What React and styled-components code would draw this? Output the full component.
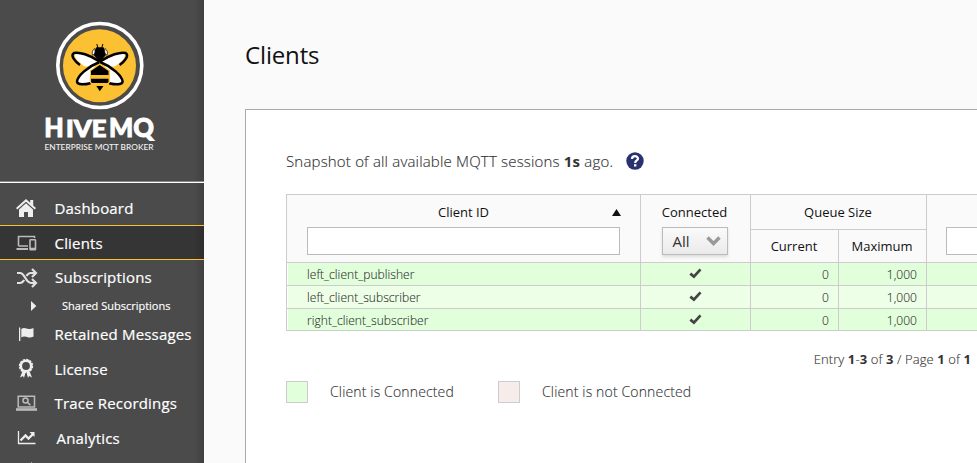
import React from "react";
import styled, { createGlobalStyle } from "styled-components";

const Global = createGlobalStyle`
  * { box-sizing: border-box; }
  html, body { margin: 0; height: 463px; overflow: hidden; }
  body { background: #fafafa; font-family: "Open Sans", "Noto Sans", sans-serif; color: #333; }
`;

const Page = styled.div`
  display: flex;
  width: 977px;
  height: 463px;
  overflow: hidden;
`;

const Sidebar = styled.aside`
  flex: 0 0 204px;
  height: 463px;
  overflow: hidden;
  background: linear-gradient(90deg, transparent 194px, rgba(0, 0, 0, 0.14) 204px), #4b4b4b;
  color: #fff;
`;

const Brand = styled.div`
  height: 183px;
  padding-top: 20px;
  border-bottom: 1px solid #fff;
  box-shadow: inset 0 -1px #8a8a8a;
`;

const Logo = styled.svg`
  display: block;
  width: 204px;
  height: 140px;
`;

const Nav = styled.nav`
  display: flex;
  flex-direction: column;
  padding-top: 8px;
`;

const NavItem = styled.a`
  display: flex;
  align-items: center;
  height: ${(p) => p.$h}px;
  flex: none;
  padding-left: 15px;
  background: ${(p) => (p.$active ? "linear-gradient(90deg, transparent 194px, rgba(0,0,0,.14) 204px), #353535" : "none")};
  border: solid ${(p) => (p.$active ? "#fcc033" : "transparent")};
  border-width: 1px 0;
`;

const IconBox = styled.span`
  display: flex;
  flex: none;
  width: 23px;
  height: 23px;
  margin-right: ${(p) => 16.5 + (p.$shift || 0)}px;
  svg { width: 23px; height: 23px; }
`;

const NavLabel = styled.span`
  font-size: 15px;
  font-weight: 400;
  line-height: 20px;
  white-space: nowrap;
  letter-spacing: 0.18px;
  -webkit-text-stroke: 0.2px #fff;
`;

const SubItem = styled.a`
  display: flex;
  flex: none;
  align-items: center;
  height: 23px;
  padding-left: 31px;
  gap: 25px;
  font-size: 11px;
  white-space: nowrap;
  -webkit-text-stroke: 0.15px #fff;
  svg { width: 6px; height: 10px; }
`;

const Main = styled.main`
  flex: 1;
  min-width: 0;
  padding-left: 41px;
  overflow: hidden;
`;

const Title = styled.h1`
  margin: 0;
  height: 109px;
  padding-top: 38px;
  color: #111;
  font-size: 24px;
  line-height: 34px;
  font-weight: 400;
  letter-spacing: -0.15px;
`;

const Panel = styled.section`
  width: 760px;
  height: 380px;
  padding: 39px 0 0 40px;
  background: #fff;
  border: 1px solid #aaa;
`;

const Snapshot = styled.div`
  display: flex;
  align-items: center;
  gap: 13px;
  height: 24px;
  font-size: 15px;
  font-weight: 300;
  letter-spacing: 0.185px;
  -webkit-text-stroke: 0.15px #333;
  white-space: nowrap;
  b { font-weight: 700; -webkit-text-stroke: 0; }
  svg { width: 18px; height: 18px; }
`;

const Table = styled.div`
  display: grid;
  grid-template-columns: 354px 110px 88px 88px 120px;
  grid-template-rows: 35px 33px 23px 23px 22px;
  width: 761px;
  margin-top: 21px;
  border: solid #ccc;
  border-width: 1px 0 0 1px;
`;

const Head = styled.div`
  display: flex;
  flex-direction: column;
  align-items: center;
  grid-row: ${(p) => (p.$tall ? "span 2" : "auto")};
  grid-column: ${(p) => p.$col || "auto"};
  padding: ${(p) => p.$top}px ${(p) => 20 + (p.$nudge || 0)}px 0 ${(p) => 20 - (p.$nudge || 0)}px;
  background: #fafafa;
  color: #111;
  font-size: 13px;
  line-height: 18px;
  border: solid #ccc;
  border-width: 0 1px 1px 0;
`;

const HeadTitle = styled.div`
  display: grid;
  grid-template-columns: 1fr auto 1fr;
  align-items: center;
  width: 100%;
  svg { width: 9px; height: 7px; justify-self: end; margin-right: -1px; }
`;

const Filter = styled.input`
  width: 313px;
  flex: none;
  align-self: flex-start;
  height: 28px;
  margin-top: 6px;
  padding: 0;
  border: 1px solid #bbb;
  background: #fff;
`;

const Select = styled.button`
  display: flex;
  align-items: center;
  justify-content: space-between;
  flex: none;
  width: 66px;
  height: 28px;
  margin-top: 6px;
  padding: 0 6px 0 10px;
  border: 1px solid #bbb;
  background: linear-gradient(#fafafa, #eaeaea);
  box-shadow: 0 2px 3px rgba(0, 0, 0, 0.12);
  color: #333;
  font: 400 15px "Open Sans", sans-serif;
  svg { width: 15px; height: 10px; }
`;

const Cell = styled.div`
  display: flex;
  align-items: flex-start;
  justify-content: ${(p) => p.$align || "flex-start"};
  min-width: 0;
  padding: 0 ${(p) => p.$right || 0}px 0 ${(p) => p.$left || 0}px;
  line-height: 24px;
  background: ${(p) => (p.$alt ? "#edffe6" : "#e2ffdc")};
  border: solid #ccc;
  border-width: 0 1px 1px 0;
  box-shadow: ${(p) => (p.$left ? "inset 1px 0 #fff" : "none")};
  font-size: 12px;
  font-weight: 300;
  letter-spacing: 0.05px;
  -webkit-text-stroke: 0.12px #333;
  svg { width: 13px; height: 11px; margin-top: 5px; }
`;

const Pager = styled.div`
  width: 685px;
  height: 20px;
  margin-top: 18px;
  font-size: 13px;
  line-height: 20px;
  font-weight: 300;
  letter-spacing: 0.1px;
  -webkit-text-stroke: 0.12px #333;
  text-align: right;
  b { font-weight: 700; -webkit-text-stroke: 0; }
`;

const Legend = styled.div`
  display: flex;
  align-items: center;
  height: 22px;
  margin-top: 12px;
  font-size: 14px;
  font-weight: 300;
  letter-spacing: 0.15px;
  -webkit-text-stroke: 0.12px #333;
`;

const Swatch = styled.span`
  width: 22px;
  height: 22px;
  margin-right: 22px;
  border: 1px solid #ccc;
  background: ${(p) => p.$color};
`;

const LegendText = styled.span`
  width: ${(p) => p.$w}px;
  padding-bottom: 2px;
  white-space: nowrap;
`;

const Home = () => (
  <svg viewBox="0 0 23 23" fill="#eee">
    <path d="M11 2 1 11l1.3 1.4L11 4.8l8.700 7.600L21 11l-2.800-2.500V3h-3v2.700z" />
    <path d="M11 6.300 4 12.400V20h5v-5h4v5h5v-7.600z" />
  </svg>
);
const Devices = () => (
  <svg viewBox="0 0 23 23" fill="none" stroke="#bbb" strokeWidth="1.600">
    <path d="M3.500 15V5.500h16V7M3.500 15H13" />
    <path d="M1.500 18H13" strokeWidth="2" />
    <rect x="15" y="8.800" width="5.500" height="10" rx=".6" />
    <path d="M15 17.500h5.500" />
  </svg>
);
const Shuffle = () => (
  <svg viewBox="0 0 23 23" fill="none" stroke="#e2e2e2" strokeWidth="2.200">
    <path d="M2 7h3c5 0 5.500 10 11 10h4M2 17h3c2 0 3.200-1.400 4.200-3M11.500 10c1-1.800 2.500-3 4.500-3h4" />
    <path d="m17 3 4 4-4 4M17 13l4 4-4 4" />
  </svg>
);
const Flag = () => (
  <svg viewBox="0 0 23 23" fill="#eee">
    <path d="M4 4.500h1.300V18H4zM6.300 6c3-2 5 0 7.500 0 1.700 0 3-.3 4.700-1v8.500c-2 1-3.500 1-5 .9-2.500-.4-4.500-1.600-7.200 0z" />
  </svg>
);
const Ribbon = () => (
  <svg viewBox="0 0 23 23" fill="none" stroke="#eee">
    <circle cx="11" cy="9" r="5.200" strokeWidth="2.600" />
    <circle cx="11" cy="9" r="6.600" strokeWidth="1.200" strokeDasharray="2.300 1.150" />
    <path d="m5 20.500 3-1.500 1 2 1.500-5.500-3-1.300zM17 20.500l-3-1.500-1 2-1.500-5.500 3-1.300z" fill="#eee" stroke="none" />
  </svg>
);
const Trace = () => (
  <svg viewBox="0 0 23 23" fill="none" stroke="#bbb" strokeWidth="1.500">
    <path d="M3.200 15V4.200h16.300V15z" />
    <path d="M1 17.500h21" strokeWidth="2.600" />
    <circle cx="10.500" cy="8.500" r="2.500" />
    <path d="m12.400 10.400 3 2.800" />
  </svg>
);
const Chart = () => (
  <svg viewBox="0 0 23 23" fill="none" stroke="#eee">
    <path d="M3.500 5v12.500h17" strokeWidth="1.300" />
    <path d="m5.500 14.500 5-5 3 3 5-5" strokeWidth="2.300" />
    <path d="M14.500 6h5v5z" fill="#eee" stroke="none" />
  </svg>
);
const Arrow = () => (
  <svg viewBox="0 0 6 10"><path d="m0 0 5.300 5L0 10z" fill="#eee" /></svg>
);
const Check = () => (
  <svg viewBox="0 0 13 11" fill="none" stroke="#444" strokeWidth="2.700">
    <path d="m1.300 5.600 3.600 3L11.500 1.300" />
  </svg>
);

const Wings = () => (
  <g>
    <path d="M99 61.500C91 56 80 52 75 53.500c-2 3 3.500 9 9 12.500 3 1.500 8 0 15-4.500z" fill="#fff" />
    <path d="M97 63.500C87 68 78 76 78 82c3 2.500 9 1 12 .5-1-8 2-13 7-19z" fill="#fff" />
    <path d="M99.500 61.500C90 55 79 51.500 74 53c-4 2.500 1 8.500 6 12" fill="none" stroke="#000" strokeWidth="2.500" />
    <path d="M99.500 62C87 67 77.500 76 77 81.500c.5 4 8 3 13.500 1.700" fill="none" stroke="#000" strokeWidth="2.500" />
  </g>
);

const BeeLogo = () => (
  <Logo viewBox="0 20 204 140">
    <circle cx="99.800" cy="65.500" r="42" fill="none" stroke="#fff" strokeWidth="3.600" />
    <circle cx="99.500" cy="65.700" r="36.500" fill="#fcc033" />
    <Wings />
    <g transform="matrix(-1 0 0 1 199.600 0)"><Wings /></g>
    <path d="m99.800 63.500 10.200 7v12l-5 3.500H95l-5-3.500v-12z" fill="#fcc033" />
    <path d="M96.300 47.300h7.200l3 7-3.300 4-3.400 4-3.400-4-3.400-4z" />
    <path d="m91 71 8.700-6 8.800 6v4H91zM91 78.700h17.500v3.200l-1 1H92l-1-1zM96.300 86h7.200l-3.700 5.300z" />
    <path d="M94.700 48.500c-2.400 1.500-3 4.200-2 6.800 2-.8 3-3.300 2-6.800zM105 48.500c2.400 1.500 3 4.200 2 6.800-2-.8-3-3.300-2-6.800z" fill="#fff" stroke="#000" strokeWidth=".7" />
    <path d="m98 48-1.200-4M101.700 48l1.200-4" stroke="#000" />
    <g fill="#fff" stroke="#fff" strokeWidth=".9" fontFamily="Lato" fontWeight="900">
      <text x="44.300" y="136.800" fontSize="26" textLength="19.500" lengthAdjust="spacingAndGlyphs">H</text>
      <text x="66" y="136.800" fontSize="22" textLength="40.500" lengthAdjust="spacingAndGlyphs">IVE</text>
      <text x="109" y="136.800" fontSize="26" textLength="45" lengthAdjust="spacingAndGlyphs">MQ</text>
    </g>
    <text x="44.500" y="150.300" fontSize="8.400" fontFamily="Lato" fontWeight="500" fill="#f2f2f2" textLength="109" lengthAdjust="spacingAndGlyphs">ENTERPRISE MQTT BROKER</text>
  </Logo>
);

const rows = ["left_client_publisher", "left_client_subscriber", "right_client_subscriber"];

export default function App() {
  return (
    <Page>
      <Global />
      <Sidebar>
        <Brand><BeeLogo /></Brand>
        <Nav>
          <NavItem $h={34}><IconBox><Home /></IconBox><NavLabel>Dashboard</NavLabel></NavItem>
          <NavItem $h={35} $active><IconBox><Devices /></IconBox><NavLabel>Clients</NavLabel></NavItem>
          <NavItem $h={34}><IconBox $shift={0.5}><Shuffle /></IconBox><NavLabel>Subscriptions</NavLabel></NavItem>
          <SubItem><Arrow />Shared Subscriptions</SubItem>
          <NavItem $h={34}><IconBox><Flag /></IconBox><NavLabel>Retained Messages</NavLabel></NavItem>
          <NavItem $h={35}><IconBox><Ribbon /></IconBox><NavLabel>License</NavLabel></NavItem>
          <NavItem $h={34}><IconBox><Trace /></IconBox><NavLabel>Trace Recordings</NavLabel></NavItem>
          <NavItem $h={35}><IconBox $shift={2}><Chart /></IconBox><NavLabel>Analytics</NavLabel></NavItem>
          <SubItem><Arrow />Dropped Messages</SubItem>
        </Nav>
      </Sidebar>
      <Main>
        <Title>Clients</Title>
        <Panel>
          <Snapshot>
            <span>Snapshot of all available MQTT sessions <b>1s</b> ago.</span>
            <svg viewBox="0 0 18 18">
              <circle cx="9" cy="9" r="8.700" fill="#28326e" />
              <path d="M6 7c0-3.800 6-3.500 6-.4C12 8.500 9.200 8.500 9.200 11" fill="none" stroke="#fff" strokeWidth="2.200" />
              <path d="M8 12.200h2.400v2.300H8z" fill="#fff" />
            </svg>
          </Snapshot>
          <Table>
            <Head $tall $top={8}>
              <HeadTitle>
                <span />
                Client ID
                <svg viewBox="0 0 9 7"><path d="M4.500 0 9 7H0z" fill="#111" /></svg>
              </HeadTitle>
              <Filter />
            </Head>
            <Head $tall $top={8} $nudge={1}>
              Connected
              <Select>
                All
                <svg viewBox="0 0 15 10"><path d="m1.500 1.500 6 6 6-6" fill="none" stroke="#999" strokeWidth="3.400" /></svg>
              </Select>
            </Head>
            <Head $col="span 2" $top={8} $nudge={0.5}>Queue Size</Head>
            <Head $tall $top={26} $nudge={1}><Filter /></Head>
            <Head $top={7} $nudge={0.5}>Current</Head>
            <Head $top={7} $nudge={0.5}>Maximum</Head>
            {rows.map((name, i) => (
              <React.Fragment key={name}>
                <Cell $alt={i === 1} $left={20}>{name}</Cell>
                <Cell $alt={i === 1} $align="center"><Check /></Cell>
                <Cell $alt={i === 1} $align="flex-end" $right={9}>0</Cell>
                <Cell $alt={i === 1} $align="flex-end" $right={9}>1,000</Cell>
                <Cell $alt={i === 1} />
              </React.Fragment>
            ))}
          </Table>
          <Pager>Entry <b>1</b>-<b>3</b> of <b>3</b> / Page <b>1</b> of <b>1</b></Pager>
          <Legend>
            <Swatch $color="#e2ffdc" />
            <LegendText $w={168}>Client is Connected</LegendText>
            <Swatch $color="#f6edeb" />
            <LegendText $w={160}>Client is not Connected</LegendText>
          </Legend>
        </Panel>
      </Main>
    </Page>
  );
}
